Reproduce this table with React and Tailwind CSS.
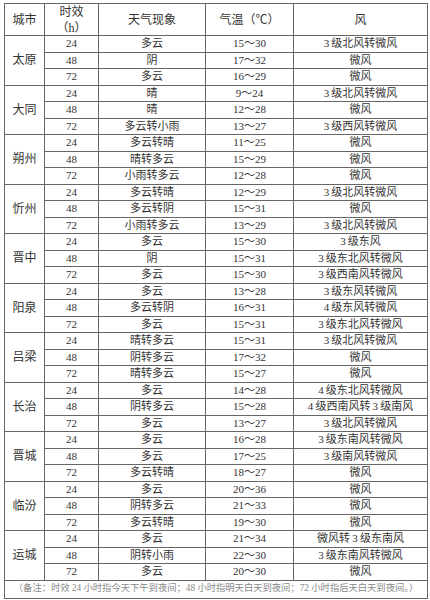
const data = [
  ['太原', [
    ['24', '多云', '15～30', '3 级北风转微风'],
    ['48', '阴', '17～32', '微风'],
    ['72', '多云', '16～29', '微风'],
  ]],
  ['大同', [
    ['24', '晴', '9～24', '3 级北风转微风'],
    ['48', '晴', '12～28', '微风'],
    ['72', '多云转小雨', '13～27', '3 级西风转微风'],
  ]],
  ['朔州', [
    ['24', '多云转晴', '11～25', '微风'],
    ['48', '晴转多云', '15～29', '微风'],
    ['72', '小雨转多云', '12～28', '微风'],
  ]],
  ['忻州', [
    ['24', '多云转晴', '12～29', '3 级北风转微风'],
    ['48', '多云转阴', '15～31', '微风'],
    ['72', '小雨转多云', '13～29', '3 级北风转微风'],
  ]],
  ['晋中', [
    ['24', '多云', '15～30', '3 级东风'],
    ['48', '阴', '15～31', '3 级东北风转微风'],
    ['72', '多云', '15～30', '3 级西南风转微风'],
  ]],
  ['阳泉', [
    ['24', '多云', '13～28', '3 级东风转微风'],
    ['48', '多云转阴', '16～31', '4 级东风转微风'],
    ['72', '多云', '15～31', '3 级东北风转微风'],
  ]],
  ['吕梁', [
    ['24', '晴转多云', '15～31', '3 级北风转微风'],
    ['48', '阴转多云', '17～32', '微风'],
    ['72', '晴转多云', '15～27', '微风'],
  ]],
  ['长治', [
    ['24', '多云', '14～28', '4 级东北风转微风'],
    ['48', '阴转多云', '15～28', '4 级西南风转 3 级南风'],
    ['72', '多云', '13～27', '3 级北风转微风'],
  ]],
  ['晋城', [
    ['24', '多云', '16～28', '3 级东南风转微风'],
    ['48', '多云', '17～25', '3 级南风转微风'],
    ['72', '多云转晴', '18～27', '微风'],
  ]],
  ['临汾', [
    ['24', '多云', '20～36', '微风'],
    ['48', '阴转多云', '21～33', '微风'],
    ['72', '多云转晴', '19～30', '微风'],
  ]],
  ['运城', [
    ['24', '多云', '21～34', '微风转 3 级东南风'],
    ['48', '阴转小雨', '22～30', '3 级东南风转微风'],
    ['72', '多云', '20～30', '微风'],
  ]],
];

const cell = 'border border-[#666] p-0 text-center align-middle';

const App = () => {
  return (
    <div className="w-[430px] h-[600px] bg-white pt-[3px] pl-[4px] overflow-hidden">
      <table
        className="table-fixed border-collapse w-[423px] text-[11px] leading-none text-[#333]"
        style={{ fontFamily: '"Liberation Serif", "Noto Sans CJK SC", serif' }}
      >
        <colgroup>
          <col className="w-[40px]" />
          <col className="w-[54px]" />
          <col className="w-[107px]" />
          <col className="w-[88px]" />
          <col className="w-[134px]" />
        </colgroup>
        <thead>
          <tr className="h-[32px] text-[12px]">
            <th className={`${cell} font-normal`}>城市</th>
            <th className={`${cell} font-normal`}>
              <div className="flex flex-col items-center gap-[4px]">
                <span>时效</span>
                <span>（h）</span>
              </div>
            </th>
            <th className={`${cell} font-normal`}>天气现象</th>
            <th className={`${cell} font-normal`}>气温（℃）</th>
            <th className={`${cell} font-normal`}>风</th>
          </tr>
        </thead>
        <tbody>
          {data.map(([city, rows]) =>
            rows.map((r, i) => (
              <tr key={city + r[0]} className="h-[16.5px]">
                {i === 0 && (
                  <td rowSpan={3} className={`${cell} text-[12px]`}>{city}</td>
                )}
                <td className={cell}>{r[0]}</td>
                <td className={cell}>{r[1]}</td>
                <td className={cell}>{r[2]}</td>
                <td className={cell}>{r[3].replace(/ /g, '\u2009')}</td>
              </tr>
            ))
          )}
          <tr className="h-[18px]">
            <td colSpan={5} className={`${cell} text-[9.3px] text-[#888] whitespace-nowrap`}>
              （备注：时效 24 小时指今天下午到夜间；48 小时指明天白天到夜间；72 小时指后天白天到夜间。）
            </td>
          </tr>
        </tbody>
      </table>
    </div>
  );
};

export default App;
